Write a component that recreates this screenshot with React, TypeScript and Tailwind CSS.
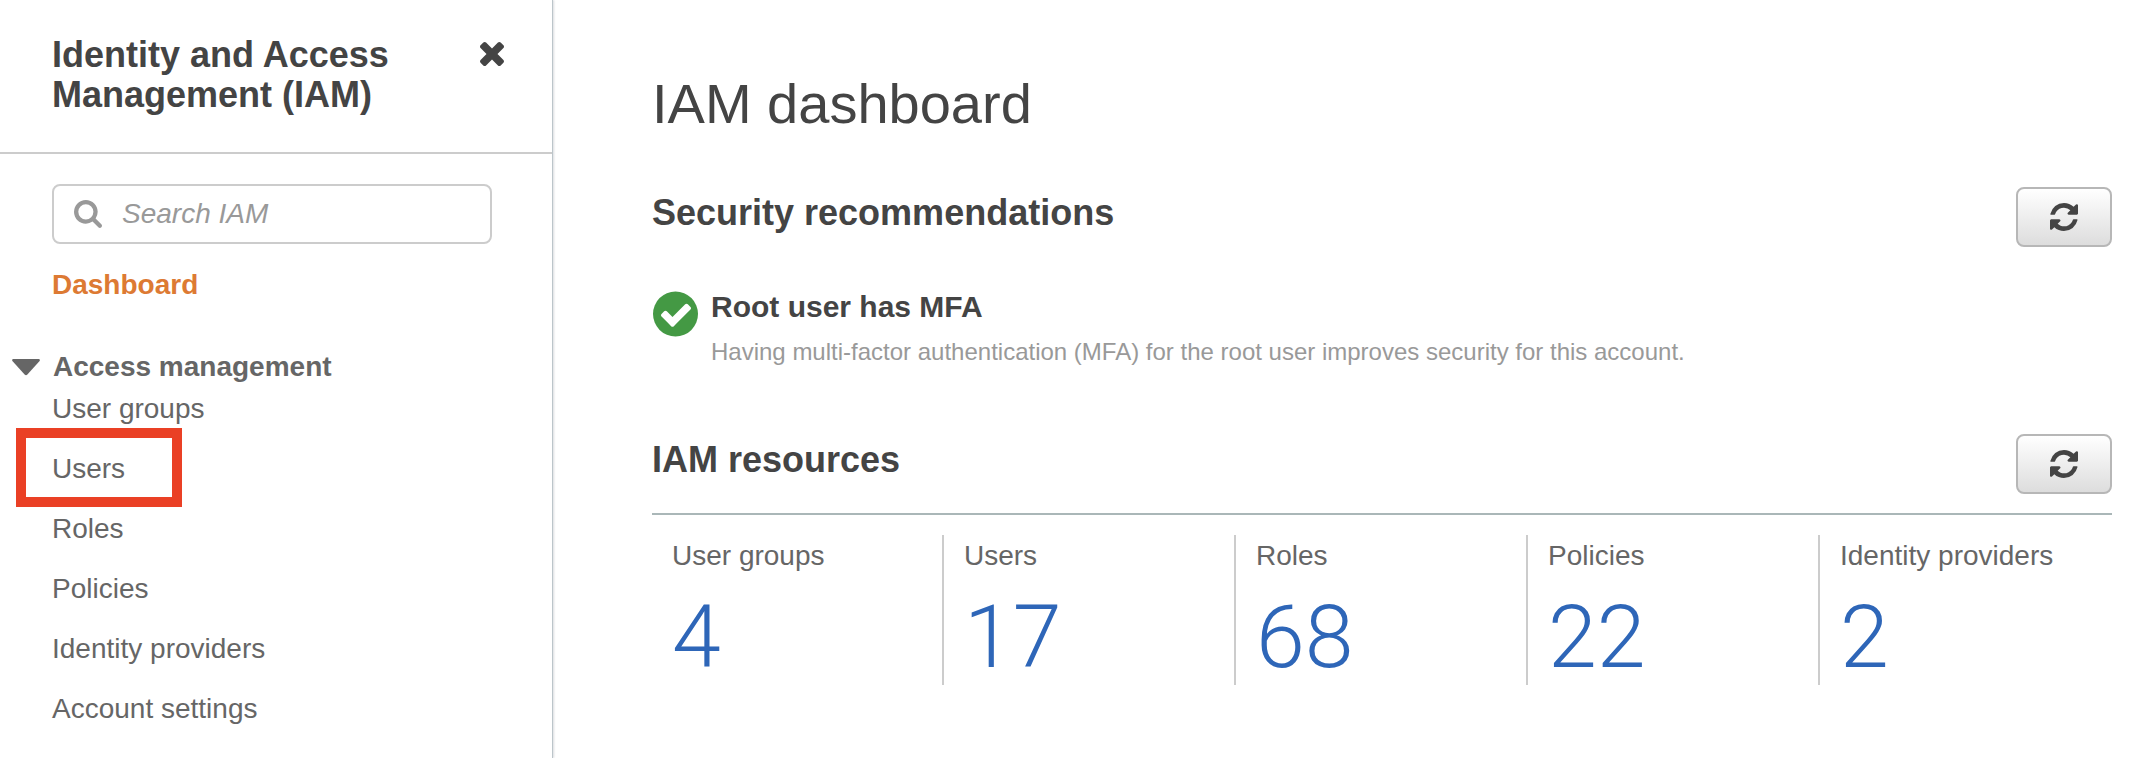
import { useState, type ReactNode } from "react";

function Glyph({ viewBox, d, className }: { viewBox: string; d: string; className: string }) {
  return (
    <svg viewBox={viewBox} className={className} fill="currentColor" aria-hidden="true">
      <path d={d} />
    </svg>
  );
}

const CLOSE =
  "M1298 1322q0 40-28 68l-136 136q-28 28-68 28t-68-28l-294-294-294 294q-28 28-68 28t-68-28l-136-136q-28-28-28-68t28-68l294-294-294-294q-28-28-28-68t28-68l136-136q28-28 68-28t68 28l294 294 294-294q28-28 68-28t68 28l136 136q28 28 28 68t-28 68l-294 294 294 294q28 28 28 68z";
const SEARCH =
  "M1152 704q0-185-131.5-316.5T704 256 387.5 387.5 256 704t131.5 316.5T704 1152t316.5-131.5T1152 704zm512 832q0 52-38 90t-90 38q-54 0-90-38l-343-342q-179 124-399 124-143 0-273.5-55.5t-225-150-150-225T0 704t55.5-273.5 150-225 225-150T704 0t273.5 55.5 225 150 150 225T1408 704q0 220-124 399l343 343q37 37 37 90z";
const REFRESH =
  "M1511 928q0 5-1 7-64 268-268 434.5T764 1536q-146 0-282.5-55T238 1324l-129 129q-19 19-45 19t-45-19-19-45V960q0-26 19-45t45-19h448q26 0 45 19t19 45-19 45l-137 137q71 66 161 102t187 36q134 0 250-65t186-179q11-17 53-117 8-23 30-23h192q13 0 22.5 9.5t9.5 22.5zm25-800v448q0 26-19 45t-45 19h-448q-26 0-45-19t-19-45 19-45l138-138Q969 256 768 256q-134 0-250 65T332 500q-11 17-53 117-8 23-30 23H50q-13 0-22.5-9.5T18 608v-7q65-268 270-434.5T768 0q146 0 284 55.5T1297 212l130-129q19-19 45-19t45 19 19 45z";
const CHECK =
  "M1671 566q0 40-28 68l-724 724-136 136q-28 28-68 28t-68-28l-136-136-362-362q-28-28-28-68t28-68l136-136q28-28 68-28t68 28l294 295 656-657q28-28 68-28t68 28l136 136q28 28 28 68z";

const links = ["User groups", "Users", "Roles", "Policies", "Identity providers", "Account settings"];

const resources = [
  { label: "User groups", count: 4 },
  { label: "Users", count: 17 },
  { label: "Roles", count: 68 },
  { label: "Policies", count: 22 },
  { label: "Identity providers", count: 2 },
];

function RefreshButton({ label }: { label: string }) {
  return (
    <button
      type="button"
      aria-label={label}
      className="flex h-15 w-24 shrink-0 items-center justify-center rounded-lg border-2 border-[#b7b7b7] bg-linear-to-b from-white to-[#dddddd] text-[#444]"
    >
      <Glyph viewBox="0 0 1536 1536" d={REFRESH} className="size-7" />
    </button>
  );
}

function SectionHeader({ title, refresh }: { title: ReactNode; refresh: string }) {
  return (
    <div className="flex items-start justify-between">
      <h2 className="pt-1 text-4xl/11 font-bold">{title}</h2>
      <RefreshButton label={refresh} />
    </div>
  );
}

function Sidebar() {
  const [open, setOpen] = useState(true);
  return (
    <aside className="w-[553px] shrink-0 border-r border-[#bcc5ca] shadow-[1px_0_2px_rgba(0,20,40,0.15)]">
      <header className="flex items-start justify-between border-b-2 border-[#ccc] pt-[35px] pr-12 pb-[37px] pl-[52px]">
        <h2 className="max-w-[360px] text-4xl/10 font-bold">Identity and Access Management (IAM)</h2>
        <button type="button" aria-label="Close navigation" className="mt-[7px]">
          <Glyph viewBox="110 366 1188 1188" d={CLOSE} className="size-6" />
        </button>
      </header>
      <nav className="pt-[30px] text-[28px]/10 text-[#666]">
        <label className="mr-15 ml-[52px] flex h-15 items-center gap-5 rounded-lg border-2 border-[#ccc] px-5 text-[#999]">
          <Glyph viewBox="0 0 1664 1664" d={SEARCH} className="size-7 shrink-0" />
          <input
            type="search"
            aria-label="Search IAM"
            placeholder="Search IAM"
            className="w-full min-w-0 italic outline-none placeholder:text-[#999]"
          />
        </label>
        <a href="#dashboard" className="mt-[21px] ml-[52px] block font-bold text-[#dd7a33]">
          Dashboard
        </a>
        <button
          type="button"
          aria-expanded={open}
          onClick={() => setOpen(!open)}
          className="mt-[42px] flex items-center gap-[13px] pl-3 font-bold"
        >
          <Glyph
            viewBox="0 0 28 17"
            d="M1 0H27Q28.4 .6 27.6 2L15.4 15.6Q14 17 12.6 15.6L.4 2Q-.4 .6 1 0Z"
            className="h-[17px] w-7"
          />
          Access management
        </button>
        {open && (
          <ul className="flex flex-col gap-5 pt-[2px] pl-[52px]">
            {links.map((name) => (
              <li key={name} className="relative">
                <a href={"#" + name}>{name}</a>
                {name === "Users" && (
                  <span className="pointer-events-none absolute -top-[21px] -left-9 h-[79px] w-[166px] border-10 border-[#ea4025]" />
                )}
              </li>
            ))}
          </ul>
        )}
      </nav>
    </aside>
  );
}

export default function App() {
  return (
    <div className="flex min-h-screen bg-white font-['Liberation_Sans',Arial,sans-serif] text-[#444]">
      <Sidebar />
      <main className="min-w-0 grow pt-[72px] pr-[30px] pl-[99px]">
        <h1 className="text-[56px]/16">IAM dashboard</h1>
        <section className="mt-[51px]">
          <SectionHeader title="Security recommendations" refresh="Refresh security recommendations" />
          <div className="mt-10 flex gap-[13px]">
            <svg viewBox="0 0 46 46" className="mt-1 size-[46px] shrink-0" aria-hidden="true">
              <circle cx="23.5" cy="23" r="22.5" fill="#449944" />
              <svg x="9" y="12" width="30" height="24" viewBox="121 304 1550 1218">
                <path fill="#fff" d={CHECK} />
              </svg>
            </svg>
            <div>
              <h3 className="text-3xl/10 font-bold">Root user has MFA</h3>
              <p className="pt-[9px] text-2xl/8 text-[#999]">
                Having multi-factor authentication (MFA) for the root user improves security for this account.
              </p>
            </div>
          </div>
        </section>
        <section className="mt-[66px]">
          <SectionHeader title="IAM resources" refresh="Refresh IAM resources" />
          <dl className="mt-[19px] grid grid-cols-5 border-t-2 border-[#aab7b8] pt-5">
            {resources.map(({ label, count }) => (
              <div key={label} className="h-[150px] border-r-2 border-[#ccc] px-5 last:border-r-0">
                <dt className="text-[28px]/[42px] text-[#666]">{label}</dt>
                <dd className="pt-3">
                  <a href={"#" + label} className="block font-[Roboto,sans-serif] text-[88px]/24 font-light text-[#2e66b8]">
                    {count}
                  </a>
                </dd>
              </div>
            ))}
          </dl>
        </section>
      </main>
    </div>
  );
}
